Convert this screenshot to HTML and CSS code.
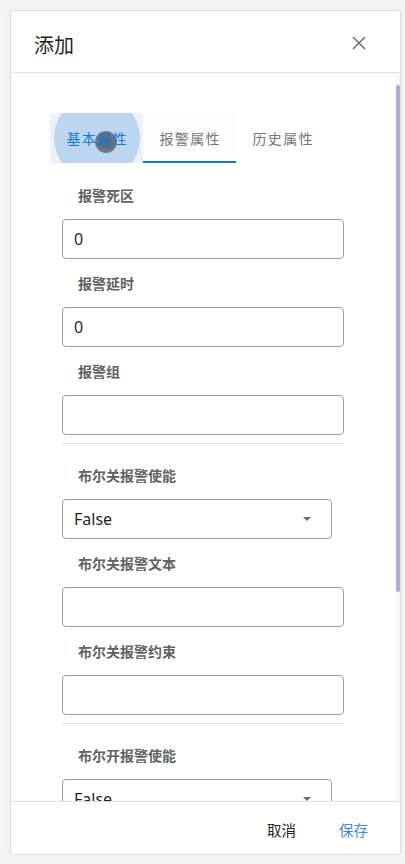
FILE: index.html
```html
<!DOCTYPE html>
<html lang="zh-CN">
<head>
<meta charset="utf-8">
<title>添加</title>
<link rel="stylesheet" href="styles.css">
</head>
<body>
<div class="dialog">
  <div class="dialog-header">
    <div class="dialog-title">添加</div>
    <button class="close-btn" aria-label="关闭">
      <svg width="14" height="14" viewBox="0 0 14 14"><path d="M1 1 L13 13 M13 1 L1 13" stroke="#6f6f6f" stroke-width="1.6" fill="none"/></svg>
    </button>
  </div>
  <div class="dialog-content">
    <div class="tabs">
      <div class="tab tab-focus">
        <span class="ripple"></span>
        <span class="touch"></span>
        <span class="tab-label">基本属性</span>
      </div>
      <div class="tab tab-indicator"><span class="tab-label">报警属性</span></div>
      <div class="tab"><span class="tab-label">历史属性</span></div>
    </div>
    <div class="form">
      <div class="section">
        <div class="field">
          <div class="label">报警死区</div>
          <div class="input">0</div>
        </div>
        <div class="field">
          <div class="label">报警延时</div>
          <div class="input">0</div>
        </div>
        <div class="field">
          <div class="label">报警组</div>
          <div class="input"></div>
        </div>
      </div>
      <div class="divider"></div>
      <div class="section">
        <div class="field">
          <div class="label">布尔关报警使能</div>
          <div class="input select"><span>False</span><span class="caret"></span></div>
        </div>
        <div class="field">
          <div class="label">布尔关报警文本</div>
          <div class="input"></div>
        </div>
        <div class="field">
          <div class="label">布尔关报警约束</div>
          <div class="input"></div>
        </div>
      </div>
      <div class="divider"></div>
      <div class="section">
        <div class="field">
          <div class="label">布尔开报警使能</div>
          <div class="input select"><span>False</span><span class="caret"></span></div>
        </div>
      </div>
    </div>
    <div class="scroll-track"><div class="scroll-thumb"></div></div>
  </div>
  <div class="dialog-footer">
    <button class="btn btn-cancel">取消</button>
    <button class="btn btn-save">保存</button>
  </div>
</div>
</body>
</html>
```
FILE: styles.css
```css
* { box-sizing: border-box; }
html, body { margin: 0; padding: 0; }
body {
  background: #f5f5f5;
  padding: 10px 0 0 10px;
  font-family: "Noto Sans", "Noto Sans CJK SC", sans-serif;
  color: #212121;
}
.dialog {
  width: 391px;
  height: 845px;
  background: #fff;
  border: 1px solid #dedede;
  border-radius: 3px;
  box-shadow: 0 0 6px rgba(0,0,0,0.05);
  display: flex;
  flex-direction: column;
  overflow: hidden;
}
.dialog-header {
  height: 62px;
  flex: none;
  border-bottom: 1px solid #e0e0e0;
  display: flex;
  align-items: center;
  justify-content: space-between;
  padding: 6px 34px 0 23px;
}
.dialog-title {
  font-family: "Noto Sans CJK SC", sans-serif;
  font-size: 20px;
  line-height: 28px;
  color: #1f1f1f;
}
.close-btn {
  border: 0;
  background: none;
  padding: 0;
  width: 14px;
  height: 14px;
  display: flex;
  margin-top: -4px;
}
.dialog-content {
  position: relative;
  flex: none;
  height: 728px;
  overflow: hidden;
  padding-top: 40px;
}
.tabs {
  display: flex;
  margin-left: 39px;
  height: 50px;
}
.tab {
  position: relative;
  width: 93px;
  height: 50px;
  display: flex;
  align-items: center;
  justify-content: center;
  overflow: hidden;
  font-family: "Noto Sans CJK SC", sans-serif;
  font-size: 14px;
  letter-spacing: 1.4px;
  color: #767676;
}
.tab-label { position: relative; margin-right: -1.4px; }
.tab-focus { background: #eef1f6; color: #1976d2; }
.tab-indicator { border-bottom: 2px solid #1976d2; padding-top: 2px; background: #fdfdfe; }
.ripple {
  position: absolute;
  left: 4px;
  top: -18px;
  width: 86px;
  height: 86px;
  border-radius: 50%;
  background: #bcd6f0;
}
.touch {
  position: absolute;
  left: 45px;
  top: 18px;
  width: 22px;
  height: 22px;
  border-radius: 50%;
  background: radial-gradient(circle, rgba(70,80,95,0.85) 0%, rgba(80,90,105,0.8) 55%, rgba(120,130,145,0.7) 100%);
}
.form {
  margin: 22px 0 0 51px;
  width: 282px;
}
.section {
  display: flex;
  flex-direction: column;
  gap: 14px;
}
.field {
  display: flex;
  flex-direction: column;
  gap: 14px;
}
.label {
  padding-left: 16px;
  font-family: "Noto Sans CJK SC", sans-serif;
  font-size: 14px;
  font-weight: 700;
  line-height: 20px;
  color: #616161;
}
.input {
  width: 282px;
  height: 40px;
  border: 1px solid #9d9d9d;
  border-radius: 4px;
  padding-left: 11px;
  display: flex;
  align-items: center;
  font-size: 16px;
  color: #1f1f1f;
}
.select {
  width: 270px;
  justify-content: space-between;
  padding-right: 20px;
}
.caret {
  width: 0;
  height: 0;
  border-left: 4.5px solid transparent;
  border-right: 4.5px solid transparent;
  border-top: 4.5px solid #6a6a6a;
}
.divider {
  height: 1px;
  background: #e3e3e3;
  margin: 8px 0 21px;
}
.scroll-track {
  position: absolute;
  top: 0;
  right: 0;
  width: 4px;
  height: 100%;
  background: #f6f6fb;
}
.scroll-thumb {
  margin-top: 12px;
  height: 507px;
  width: 4px;
  border-radius: 2px;
  background: #a8b0d6;
}
.dialog-footer {
  flex: 1;
  border-top: 1px solid #e0e0e0;
  display: flex;
  align-items: center;
  justify-content: flex-end;
  gap: 43px;
  padding: 3px 32px 0 0;
}
.btn {
  border: 0;
  background: none;
  padding: 0;
  font-family: "Noto Sans CJK SC", sans-serif;
  font-size: 14.5px;
  color: #222;
}
.btn-save { color: #3d8ad9; }
```
